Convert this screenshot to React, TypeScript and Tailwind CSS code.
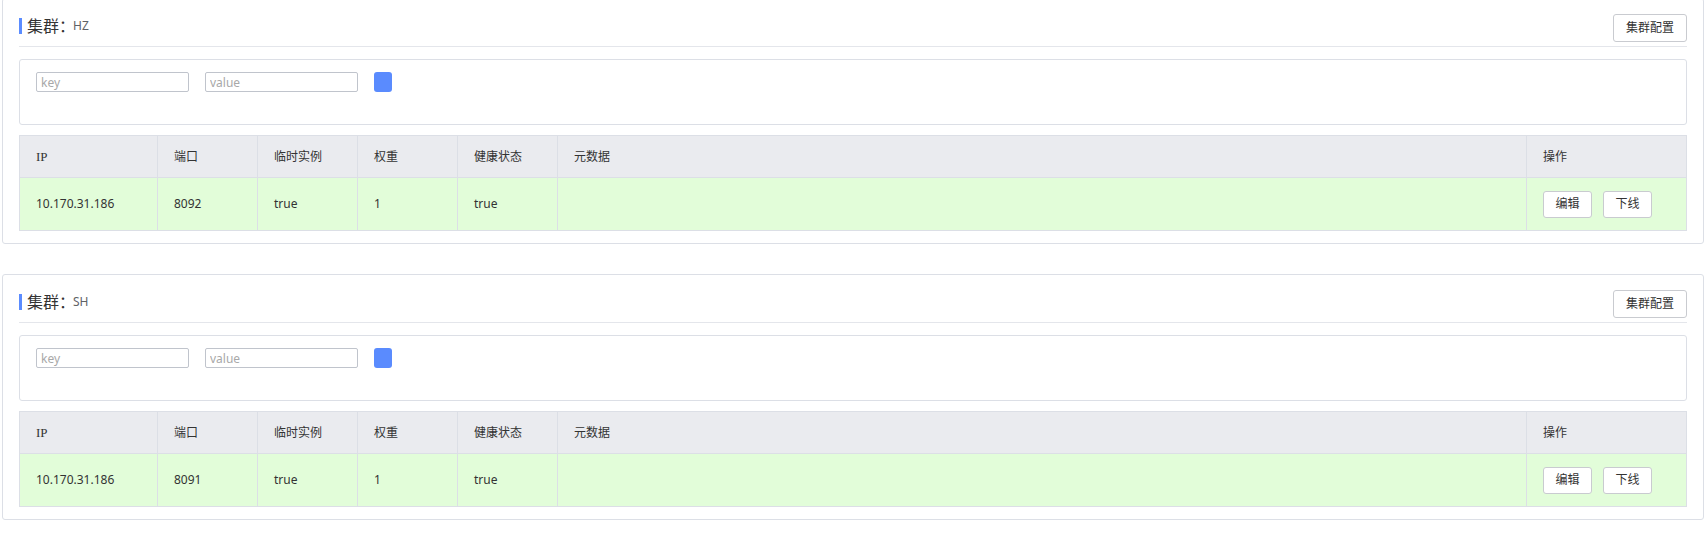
import React from 'react';

type Instance = {
  ip: string;
  port: string;
  ephemeral: string;
  weight: string;
  healthy: string;
  metadata: string;
};

const clusters: { name: string; instances: Instance[] }[] = [
  {
    name: 'HZ',
    instances: [{ ip: '10.170.31.186', port: '8092', ephemeral: 'true', weight: '1', healthy: 'true', metadata: '' }],
  },
  {
    name: 'SH',
    instances: [{ ip: '10.170.31.186', port: '8091', ephemeral: 'true', weight: '1', healthy: 'true', metadata: '' }],
  },
];

const headers = ['IP', '端口', '临时实例', '权重', '健康状态', '元数据', '操作'];

function SmallButton({ children }: { children: React.ReactNode }) {
  return (
    <button className="h-[27px] w-[49px] rounded-[3px] border border-[#c9cbd0] bg-white text-[12px] text-[#333]">
      {children}
    </button>
  );
}

function ClusterCard({ name, instances }: { name: string; instances: Instance[] }) {
  return (
    <div className="ml-[2px] w-[1702px] rounded-[3px] border border-[#dcdfe6] bg-white px-[16px] pb-[12px] pt-[15px]">
      {/* header */}
      <div className="flex items-start justify-between border-b border-[#e4e6eb] pb-[4px]">
        <div className="mt-[4px] flex h-[16px] items-center border-l-[3px] border-[#5b8cff] pl-[5px]">
          <span className="text-[16px] leading-[16px] text-[#333]">集群：</span>
          <span className="ml-[-2px] text-[12px] leading-[16px] text-[#606266]">{name}</span>
        </div>
        <button className="h-[28px] w-[74px] rounded-[3px] border border-[#c9cbd0] bg-white text-[12px] text-[#333]">
          集群配置
        </button>
      </div>

      {/* filter */}
      <div className="mt-[12px] flex gap-[16px] rounded-[3px] border border-[#dcdfe6] px-[16px] pb-[32px] pt-[12px]">
        <input
          placeholder="key"
          className="h-[20px] w-[153px] rounded-[2px] border border-[#c0c4cc] px-[4px] text-[12px] outline-none placeholder:text-[#a8a8a8]"
        />
        <input
          placeholder="value"
          className="h-[20px] w-[153px] rounded-[2px] border border-[#c0c4cc] px-[4px] text-[12px] outline-none placeholder:text-[#a8a8a8]"
        />
        <button className="h-[20px] w-[18px] rounded-[3px] bg-[#5a8bfe]" />
      </div>

      {/* table */}
      <div className="mt-[10px] grid grid-cols-[138px_100px_100px_100px_100px_1fr_160px] border-l border-t border-[#dcdfe6] text-[12px] text-[#333]">
        {headers.map((h, i) => (
          <div
            key={h}
            className={`flex h-[42px] items-center border-b border-r border-[#dcdfe6] bg-[#eaebef] pl-[16px] ${
              i === 0 ? "font-['Liberation_Serif',serif] text-[13px]" : ''
            }`}
          >
            {h}
          </div>
        ))}
        {instances.map((ins, idx) => (
          <React.Fragment key={idx}>
            <div className="flex h-[53px] items-center border-b border-r border-[#dcdfe6] bg-[#e2fdd9] pl-[16px]">{ins.ip}</div>
            <div className="flex h-[53px] items-center border-b border-r border-[#dcdfe6] bg-[#e2fdd9] pl-[16px]">{ins.port}</div>
            <div className="flex h-[53px] items-center border-b border-r border-[#dcdfe6] bg-[#e2fdd9] pl-[16px]">{ins.ephemeral}</div>
            <div className="flex h-[53px] items-center border-b border-r border-[#dcdfe6] bg-[#e2fdd9] pl-[16px]">{ins.weight}</div>
            <div className="flex h-[53px] items-center border-b border-r border-[#dcdfe6] bg-[#e2fdd9] pl-[16px]">{ins.healthy}</div>
            <div className="flex h-[53px] items-center border-b border-r border-[#dcdfe6] bg-[#e2fdd9] pl-[16px]">{ins.metadata}</div>
            <div className="flex h-[53px] items-center gap-[11px] border-b border-r border-[#dcdfe6] bg-[#e2fdd9] pl-[16px]">
              <SmallButton>编辑</SmallButton>
              <SmallButton>下线</SmallButton>
            </div>
          </React.Fragment>
        ))}
      </div>
    </div>
  );
}

export default function App() {
  return (
    <div className="min-h-screen bg-white font-['Noto_Sans','Noto_Sans_CJK_SC',sans-serif]">
      <div className="-mt-[2px] flex flex-col gap-[30px]">
        {clusters.map((c) => (
          <ClusterCard key={c.name} name={c.name} instances={c.instances} />
        ))}
      </div>
    </div>
  );
}
